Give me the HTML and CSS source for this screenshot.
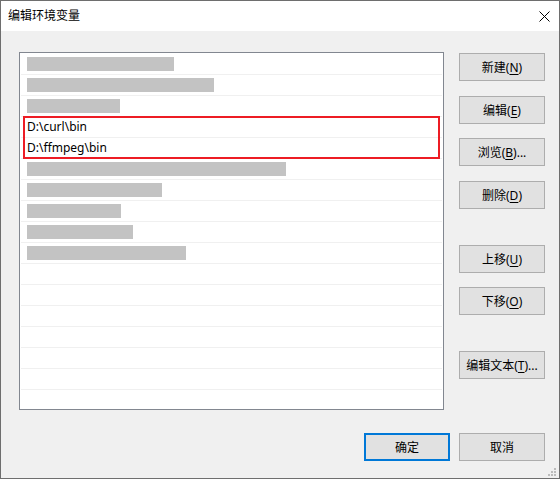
FILE: index.html
```html
<!DOCTYPE html>
<html lang="zh-CN">

<head>
    <meta charset="UTF-8">
    <meta name="viewport" content="width=device-width, initial-scale=1.0">
    <title>编辑环境变量</title>
    <link rel="stylesheet" href="styles.css">
</head>

<body>
    <div class="window">
        <div class="titlebar">
            <span class="title">编辑环境变量</span>
            <span class="close">
                <svg width="11" height="11" viewBox="0 0 11 11">
                    <path d="M0.5 0.5 L10.5 10.5 M10.5 0.5 L0.5 10.5" stroke="#000" stroke-width="1" fill="none" />
                </svg>
            </span>
        </div>

        <div class="content">
            <div class="main">
                <!-- Lista de rutas (las ocultas van como barras grises) -->
                <div class="list">
                    <div class="row"><span class="hidden" style="width: 147px"></span></div>
                    <div class="row"><span class="hidden" style="width: 187px"></span></div>
                    <div class="row"><span class="hidden" style="width: 93px"></span></div>
                    <div class="marked">
                        <div class="row">D:\curl\bin</div>
                        <div class="row">D:\ffmpeg\bin</div>
                    </div>
                    <div class="row"><span class="hidden" style="width: 259px"></span></div>
                    <div class="row"><span class="hidden" style="width: 135px"></span></div>
                    <div class="row"><span class="hidden" style="width: 94px"></span></div>
                    <div class="row"><span class="hidden" style="width: 106px"></span></div>
                    <div class="row"><span class="hidden" style="width: 159px"></span></div>
                    <div class="row"></div>
                    <div class="row"></div>
                    <div class="row"></div>
                    <div class="row"></div>
                    <div class="row"></div>
                    <div class="row"></div>
                    <div class="row"></div>
                </div>

                <div class="actions">
                    <div class="group">
                        <button>新建(<u>N</u>)</button>
                        <button>编辑(<u>E</u>)</button>
                        <button>浏览(<u>B</u>)...</button>
                        <button>删除(<u>D</u>)</button>
                    </div>
                    <div class="group">
                        <button>上移(<u>U</u>)</button>
                        <button>下移(<u>O</u>)</button>
                    </div>
                    <div class="group">
                        <button>编辑文本(<u>T</u>)...</button>
                    </div>
                </div>
            </div>

            <div class="footer">
                <button class="default">确定</button>
                <button>取消</button>
            </div>
        </div>

        <svg class="grip" width="9" height="9" viewBox="0 0 9 9">
            <rect x="6" y="0" width="2" height="2" fill="#bcbcbc" />
            <rect x="3" y="3" width="2" height="2" fill="#bcbcbc" />
            <rect x="6" y="3" width="2" height="2" fill="#bcbcbc" />
            <rect x="0" y="6" width="2" height="2" fill="#bcbcbc" />
            <rect x="3" y="6" width="2" height="2" fill="#bcbcbc" />
            <rect x="6" y="6" width="2" height="2" fill="#bcbcbc" />
        </svg>
    </div>
</body>

</html>
```

FILE: styles.css
```css
html,
body {
    margin: 0;
    padding: 0;
}

body {
    font-family: "Noto Sans", "Noto Sans CJK SC", sans-serif;
    font-size: 12px;
    color: #000;
    background-color: #f0f0f0;
}

.window {
    position: relative;
    width: 560px;
    height: 479px;
    box-sizing: border-box;
    border: 1px solid #6e6e6e;
    display: flex;
    flex-direction: column;
    background-color: #f0f0f0;
}

.titlebar {
    height: 30px;
    flex-shrink: 0;
    background-color: white;
    display: flex;
    align-items: center;
    justify-content: space-between;
    padding-left: 7px;
}

.title {
    font-size: 12px;
    line-height: 16px;
}

.close {
    display: flex;
    margin-right: 9px;
}

.content {
    flex: 1;
    padding: 21px 14px 0 18px;
}

.main {
    display: flex;
    gap: 15px;
}

.list {
    width: 425px;
    height: 358px;
    box-sizing: border-box;
    border: 1px solid #828790;
    background-color: white;
    padding: 1px 1px 0 1px;
    overflow: hidden;
}

.row {
    height: 21px;
    box-sizing: border-box;
    border-bottom: 1px solid #f0f0f0;
    padding-left: 6px;
    line-height: 20px;
    white-space: nowrap;
}

.hidden {
    display: inline-block;
    height: 14px;
    margin-top: 3px;
    vertical-align: top;
    background-color: #c3c3c3;
}

.marked {
    position: relative;
}

.marked::after {
    content: "";
    position: absolute;
    top: -1px;
    bottom: 0;
    left: 2px;
    right: 2px;
    border: 2px solid #ed1c24;
    pointer-events: none;
}

.actions {
    width: 86px;
    padding-top: 1px;
    display: flex;
    flex-direction: column;
    gap: 36px;
}

.group {
    display: flex;
    flex-direction: column;
    gap: 14.5px;
}

button {
    width: 86px;
    height: 28px;
    box-sizing: border-box;
    padding: 0;
    border: 1px solid #adadad;
    background-color: #e1e1e1;
    font-family: inherit;
    font-size: 12px;
    color: #000;
    white-space: nowrap;
}

button u {
    text-underline-offset: 2px;
}

.footer {
    margin-top: 23px;
    display: flex;
    justify-content: flex-end;
    gap: 9px;
}

button.default {
    border: 2px solid #0078d7;
}

.grip {
    position: absolute;
    right: 2px;
    bottom: 1px;
}
```
